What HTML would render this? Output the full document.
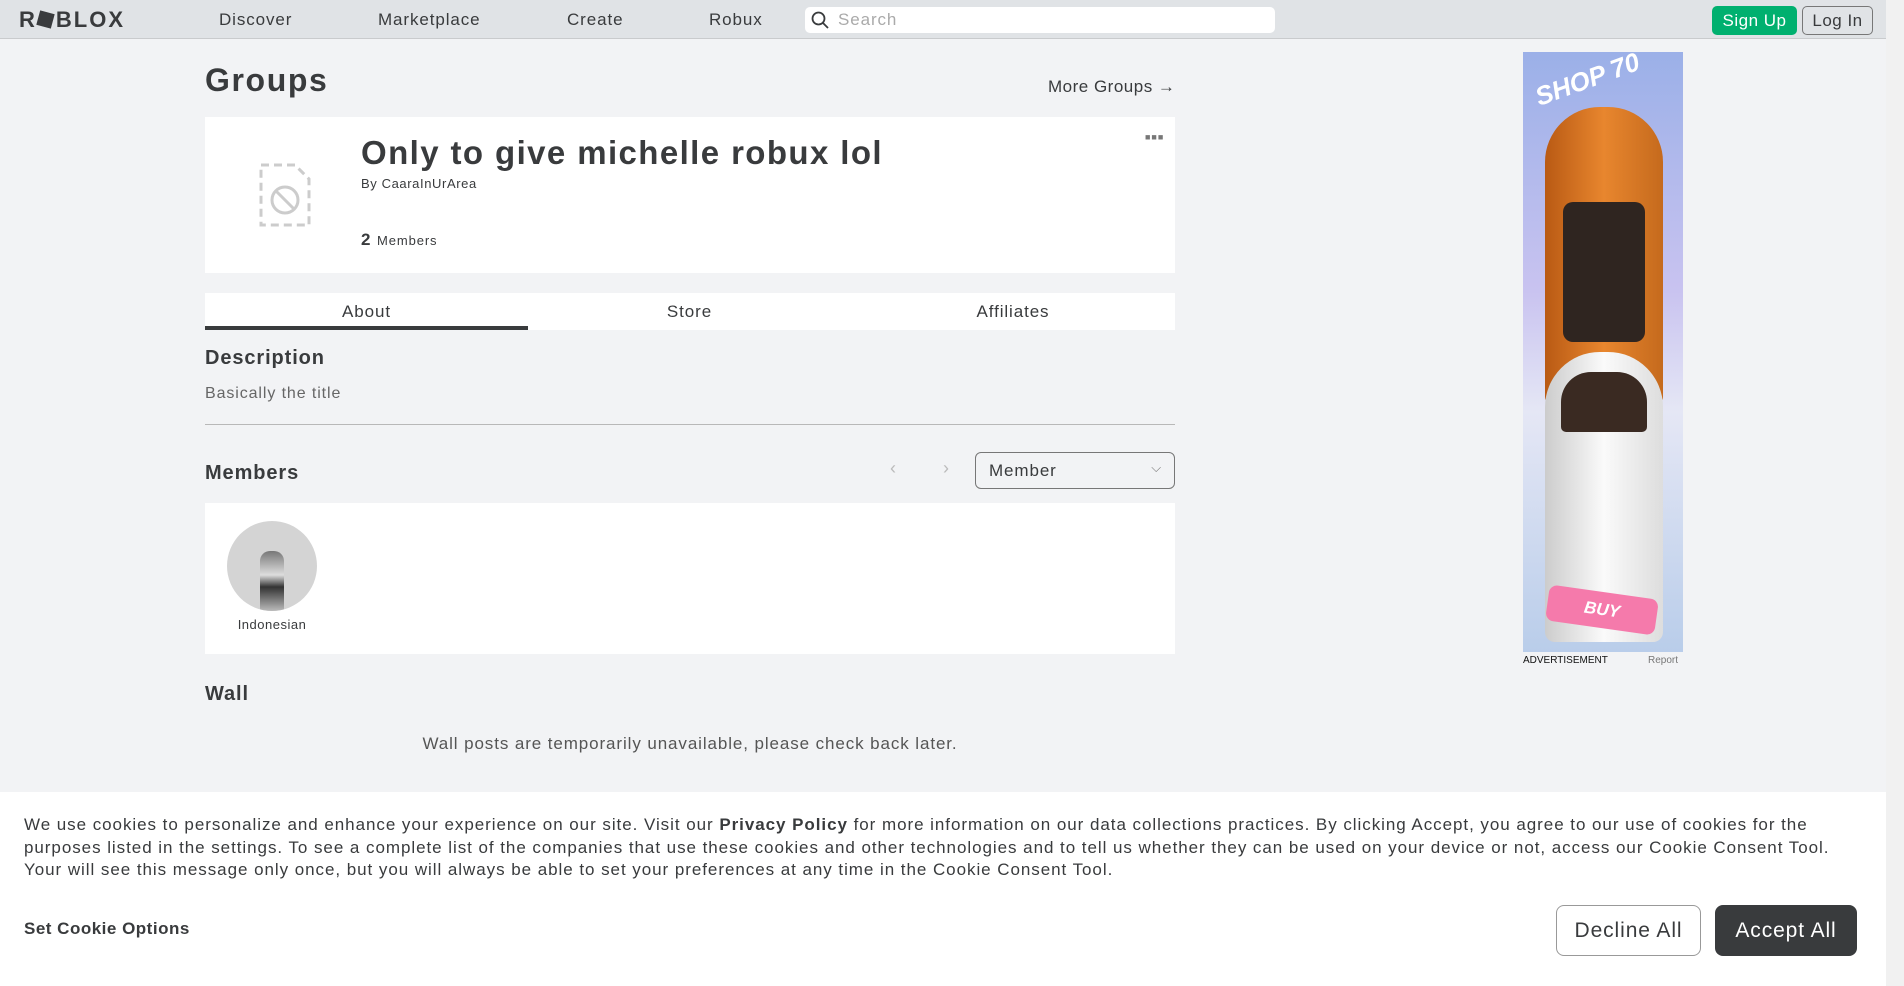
<!DOCTYPE html>
<html><head><meta charset="utf-8"><style>
*{box-sizing:border-box;margin:0;padding:0}
body{width:1904px;height:986px;overflow:hidden;background:#f2f3f5;font-family:"Liberation Sans",sans-serif;color:#393b3d;position:relative;letter-spacing:0.9px}
.abs{position:absolute}
#hdr{left:0;top:0;width:1886px;height:39px;background:#e0e3e6;border-bottom:1px solid #c9cbcd}
.nav{top:10px;font-size:17px;color:#393b3d}
#scroll{left:1886px;top:0;width:18px;height:986px;background:#f1f1f1}
.card{background:#fff}
</style></head><body>
<div id="hdr" class="abs">
 <div class="abs" style="left:19px;top:7px;font-size:22px;font-weight:900;letter-spacing:2px;color:#393b3d">R<span style="display:inline-block;width:15px;height:15px;background:#393b3d;transform:rotate(15deg);margin:0 3px 0 1px"></span>BLOX</div>
 <div class="abs nav" style="left:219px">Discover</div>
 <div class="abs nav" style="left:378px">Marketplace</div>
 <div class="abs nav" style="left:567px">Create</div>
 <div class="abs nav" style="left:709px">Robux</div>
 <div class="abs" style="left:805px;top:7px;width:470px;height:26px;background:#fff;border-radius:5px">
  <svg class="abs" style="left:6px;top:4px" width="18" height="18" viewBox="0 0 18 18"><circle cx="7.5" cy="7.5" r="6" fill="none" stroke="#393b3d" stroke-width="1.8"/><path d="M12 12l5 5" stroke="#393b3d" stroke-width="1.8"/></svg>
  <span class="abs" style="left:33px;top:3px;font-size:17px;color:#aaa">Search</span>
 </div>
 <div class="abs" style="left:1712px;top:6px;width:85px;height:29px;background:#00b06f;border-radius:5px;color:#fff;font-size:17px;text-align:center;line-height:29px;letter-spacing:0.5px">Sign Up</div>
 <div class="abs" style="left:1802px;top:6px;width:71px;height:29px;border:1px solid #777;border-radius:5px;font-size:17px;text-align:center;line-height:27px;letter-spacing:0.5px">Log In</div>
</div>
<div id="scroll" class="abs"></div>

<div class="abs" style="left:205px;top:62px;font-size:32px;font-weight:bold;letter-spacing:1.6px">Groups</div>
<div class="abs" style="left:1048px;top:77px;font-size:17px;color:#393b3d;letter-spacing:0.5px">More Groups →</div>

<div class="abs card" style="left:205px;top:117px;width:970px;height:156px">
 <svg class="abs" style="left:54px;top:46px" width="52" height="64" viewBox="0 0 52 64"><path d="M2 2h34l14 14v46H2z" fill="none" stroke="#ccc" stroke-width="3" stroke-dasharray="8 5"/><circle cx="26" cy="37" r="13" fill="none" stroke="#ccc" stroke-width="3"/><path d="M17 28l18 18" stroke="#ccc" stroke-width="3"/></svg>
 <div class="abs" style="left:156px;top:17px;font-size:33px;font-weight:bold;color:#393b3d;letter-spacing:1.4px">Only to give michelle robux lol</div>
 <div class="abs" style="left:156px;top:59px;font-size:13px;letter-spacing:0.6px">By CaaraInUrArea</div>
 <div class="abs" style="left:156px;top:113px;font-size:17px;font-weight:bold">2 <span style="font-size:13px;font-weight:normal">Members</span></div>
 <div class="abs" style="left:940px;top:15px;font-size:9px;color:#777;letter-spacing:1px">■■■</div>
</div>

<div class="abs card" style="left:205px;top:293px;width:970px;height:37px;font-size:17px">
 <div class="abs" style="left:0;top:9px;width:323px;text-align:center">About</div>
 <div class="abs" style="left:0;bottom:0;width:323px;height:4px;background:#393b3d"></div>
 <div class="abs" style="left:323px;top:9px;width:323px;text-align:center">Store</div>
 <div class="abs" style="left:646px;top:9px;width:324px;text-align:center">Affiliates</div>
</div>

<div class="abs" style="left:205px;top:347px;font-size:20px;font-weight:bold">Description</div>
<div class="abs" style="left:205px;top:385px;font-size:16px;color:#666">Basically the title</div>
<div class="abs" style="left:205px;top:424px;width:970px;height:1px;background:#b8b8b8"></div>

<div class="abs" style="left:205px;top:462px;font-size:20px;font-weight:bold">Members</div>
<div class="abs" style="left:890px;top:458px;font-size:18px;color:#bbb">‹</div>
<div class="abs" style="left:943px;top:458px;font-size:18px;color:#bbb">›</div>
<div class="abs" style="left:975px;top:452px;width:200px;height:37px;border:1px solid #777;border-radius:6px;font-size:17px;padding:8px 13px">Member<span class="abs" style="right:12px;top:7px;font-size:13px;color:#777">⌵</span></div>

<div class="abs card" style="left:205px;top:503px;width:970px;height:151px">
 <div class="abs" style="left:22px;top:18px;width:90px;height:90px;border-radius:50%;background:#d4d4d4;overflow:hidden">
  <div class="abs" style="left:33px;top:30px;width:24px;height:60px;background:linear-gradient(#777,#ddd 40%,#333 60%,#bbb);border-radius:10px 10px 0 0"></div>
 </div>
 <div class="abs" style="left:0;top:114px;width:134px;text-align:center;font-size:13px;letter-spacing:0.5px">Indonesian</div>
</div>

<div class="abs" style="left:205px;top:683px;font-size:20px;font-weight:bold">Wall</div>
<div class="abs" style="left:205px;top:734px;width:970px;text-align:center;font-size:17px;color:#555">Wall posts are temporarily unavailable, please check back later.</div>

<div class="abs" style="left:1523px;top:52px;width:160px;height:600px;background:linear-gradient(180deg,#9bb0e8 0%,#c9c3f0 40%,#e5e7f5 60%,#b9cdea 100%);overflow:hidden;letter-spacing:0">
 <div class="abs" style="left:10px;top:12px;font-size:26px;font-style:italic;font-weight:bold;color:#fff;transform:rotate(-20deg)">SHOP 70</div>
 <div class="abs" style="left:22px;top:55px;width:118px;height:300px;background:linear-gradient(90deg,#b95a14,#e8862e 50%,#c56a1d);border-radius:55px 55px 10px 10px"></div>
 <div class="abs" style="left:40px;top:150px;width:82px;height:140px;background:#2f2520;border-radius:10px"></div>
 <div class="abs" style="left:22px;top:300px;width:118px;height:290px;background:linear-gradient(90deg,#ccc,#fafafa 50%,#ddd);border-radius:55px 55px 10px 10px"></div>
 <div class="abs" style="left:38px;top:320px;width:86px;height:60px;background:#3a2a22;border-radius:30px 30px 5px 5px"></div>
 <div class="abs" style="left:24px;top:540px;width:110px;height:36px;background:#f57aab;border-radius:8px;transform:rotate(8deg);color:#fff;font-weight:bold;font-style:italic;font-size:17px;text-align:center;line-height:36px">BUY</div>
</div>
<div class="abs" style="left:1523px;top:655px;font-size:10px;color:#111;letter-spacing:0">ADVERTISEMENT</div>
<div class="abs" style="left:1648px;top:655px;font-size:10px;color:#777;letter-spacing:0">Report</div>

<div class="abs" style="left:0;top:792px;width:1886px;height:194px;background:#fff">
 <div class="abs" style="left:24px;top:22px;font-size:17px;line-height:22.6px;color:#393b3d;letter-spacing:0.95px;white-space:nowrap">We use cookies to personalize and enhance your experience on our site. Visit our <b>Privacy Policy</b> for more information on our data collections practices. By clicking Accept, you agree to our use of cookies for the<br>purposes listed in the settings. To see a complete list of the companies that use these cookies and other technologies and to tell us whether they can be used on your device or not, access our Cookie Consent Tool.<br>Your will see this message only once, but you will always be able to set your preferences at any time in the Cookie Consent Tool.</div>
 <div class="abs" style="left:24px;top:127px;font-size:17px;font-weight:bold;letter-spacing:0.5px">Set Cookie Options</div>
 <div class="abs" style="left:1556px;top:113px;width:145px;height:51px;border:1px solid #999;border-radius:8px;font-size:21px;text-align:center;line-height:49px;color:#393b3d">Decline All</div>
 <div class="abs" style="left:1715px;top:113px;width:142px;height:51px;background:#393b3d;border-radius:8px;font-size:21px;text-align:center;line-height:51px;color:#fff">Accept All</div>
</div>
</body></html>
